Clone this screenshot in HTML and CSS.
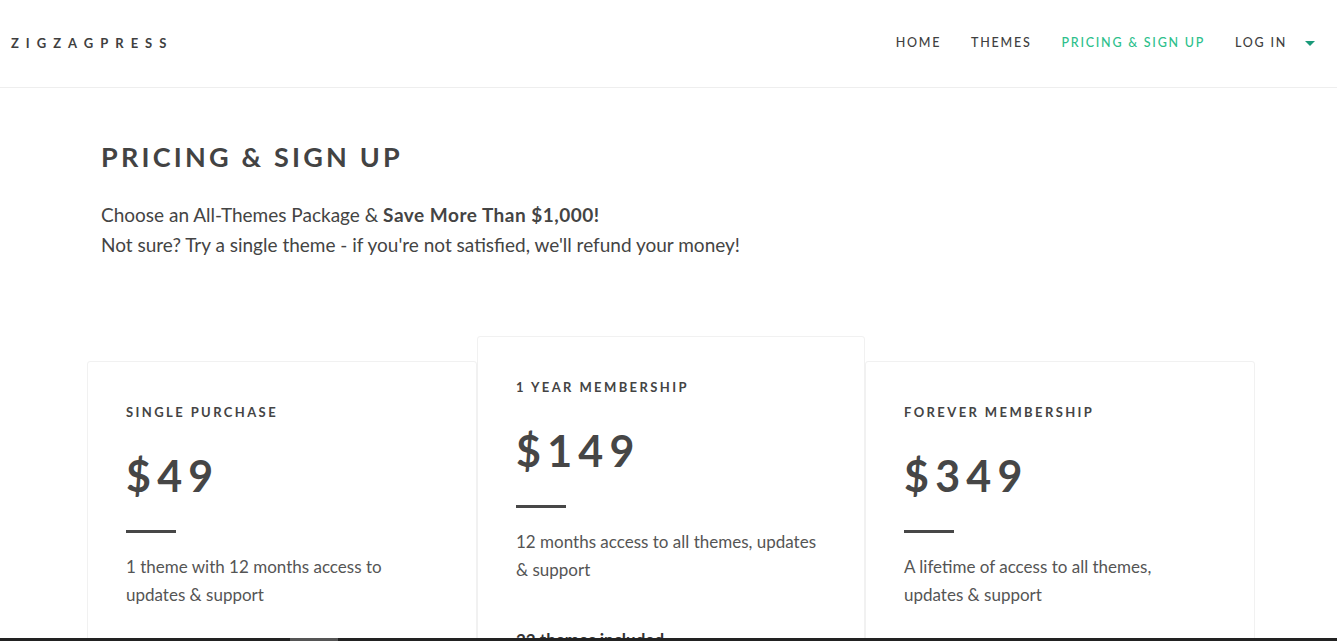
FILE: index.html
```html
<!DOCTYPE html>
<html lang="en">
<head>
<meta charset="utf-8">
<title>Pricing &amp; Sign Up - ZigzagPress</title>
<link rel="stylesheet" href="styles.css">
</head>
<body>
<header class="site-header">
  <a class="logo" href="#">ZIGZAGPRESS</a>
  <nav class="main-nav">
    <a href="#" class="nav-link">HOME</a>
    <a href="#" class="nav-link">THEMES</a>
    <a href="#" class="nav-link active">PRICING &amp; SIGN UP</a>
    <a href="#" class="nav-link login">LOG IN <span class="caret"></span></a>
  </nav>
</header>
<main class="page">
  <section class="intro">
    <h1 class="page-title">PRICING &amp; SIGN UP</h1>
    <p class="lead">Choose an All-Themes Package &amp; <strong>Save More Than $1,000!</strong><br>Not sure? Try a single theme - if you're not satisfied, we'll refund your money!</p>
  </section>
  <section class="plans">
    <div class="plan">
      <h3 class="plan-name">SINGLE PURCHASE</h3>
      <div class="plan-price">$49</div>
      <div class="plan-rule"></div>
      <p class="plan-desc">1 theme with 12 months access to updates &amp; support</p>
    </div>
    <div class="plan featured">
      <h3 class="plan-name">1 YEAR MEMBERSHIP</h3>
      <div class="plan-price">$149</div>
      <div class="plan-rule"></div>
      <p class="plan-desc">12 months access to all themes, updates &amp; support</p>
      <p class="plan-extra">22 themes included</p>
    </div>
    <div class="plan">
      <h3 class="plan-name">FOREVER MEMBERSHIP</h3>
      <div class="plan-price">$349</div>
      <div class="plan-rule"></div>
      <p class="plan-desc">A lifetime of access to all themes, updates &amp; support</p>
    </div>
  </section>
</main>
<div class="bottom-bar"><span class="bottom-thumb"></span></div>
</body>
</html>
```
FILE: styles.css
```css
* { box-sizing: border-box; }
html, body { margin: 0; padding: 0; }
body {
  font-family: Lato, "Open Sans", sans-serif;
  color: #4a4a4a;
  background: #fff;
  overflow: hidden;
}
a { text-decoration: none; color: inherit; }

.site-header {
  height: 88px;
  border-bottom: 1px solid #eeeeee;
  display: flex;
  align-items: center;
  justify-content: space-between;
  padding: 0 22px 0 11px;
}
.logo {
  font-size: 13px;
  font-weight: 700;
  letter-spacing: 7px;
  color: #3f3f3f;
  margin-top: -2px;
}
.main-nav {
  display: flex;
  align-items: center;
  gap: 30px;
  margin-top: -2px;
}
.nav-link {
  font-size: 12.5px;
  letter-spacing: 1.75px;
  color: #404040;
  font-weight: 500;
}
.nav-link.active { color: #2dbf8c; }
.login { display: flex; align-items: center; }
.caret {
  display: inline-block;
  width: 0; height: 0;
  border-left: 5px solid transparent;
  border-right: 5px solid transparent;
  border-top: 5px solid #1a9a7a;
  margin-left: 18px;
  margin-top: 2px;
}

.page {
  padding: 0 82px 0 87px;
}
.intro {
  padding: 52px 0 0 14px;
}
.page-title {
  margin: 0;
  font-size: 27px;
  font-weight: 700;
  letter-spacing: 3.2px;
  color: #434343;
  line-height: 34px;
}
.lead {
  margin: 26px 0 0;
  font-size: 19px;
  line-height: 30px;
  color: #444;
}
.lead strong { font-weight: 700; letter-spacing: 0.5px; }

.plans {
  margin-top: 76px;
  display: grid;
  grid-template-columns: 390px 388px 390px;
  align-items: start;
}
.plan {
  background: #fff;
  border: 1px solid #f1f1f1;
  border-radius: 3px;
  padding: 37px 38px 60px;
  margin-top: 25px;
  min-height: 320px;
}
.plan.featured {
  margin-top: 0;
  position: relative;
  z-index: 1;
}
.plan-name {
  margin: 0;
  font-size: 13px;
  font-weight: 700;
  letter-spacing: 2.4px;
  color: #444;
  line-height: 26px;
}
.plan-price {
  margin-top: 23px;
  font-size: 43px;
  font-weight: 700;
  letter-spacing: 6.2px;
  line-height: 56px;
  color: #464646;
}
.plan-rule {
  width: 50px;
  height: 3px;
  background: #474747;
  margin-top: 26px;
}
.plan-desc {
  margin: 20px 0 0;
  font-size: 17px;
  line-height: 28px;
  color: #555;
  max-width: 306px;
}
.plan-extra {
  margin: 45px 0 0;
  font-size: 17px;
  font-weight: 700;
  color: #333;
}

.bottom-bar {
  position: fixed;
  left: 0; right: 0; bottom: 0;
  height: 3px;
  background: #222;
  z-index: 10;
}
.bottom-thumb {
  position: absolute;
  left: 290px;
  width: 48px;
  top: 0; bottom: 0;
  background: #555;
}
```
